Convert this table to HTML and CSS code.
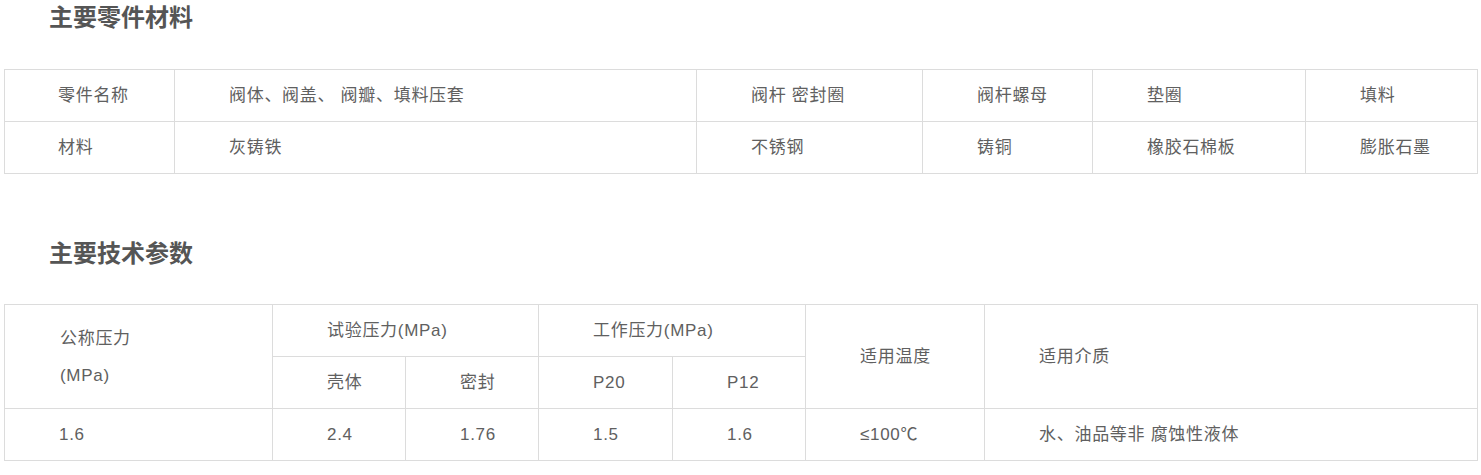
FILE: index.html
```html
<!DOCTYPE html>
<html lang="zh-CN">
<head>
<meta charset="utf-8">
<title>主要零件材料</title>
<link rel="stylesheet" href="styles.css">
</head>
<body>
<div class="page">
  <h2 class="title">主要零件材料</h2>
  <table class="spec parts">
    <colgroup>
      <col class="p1"><col class="p2"><col class="p3"><col class="p4"><col class="p5"><col class="p6">
    </colgroup>
    <tr>
      <td>零件名称</td>
      <td>阀体、阀盖、 阀瓣、填料压套</td>
      <td>阀杆 密封圈</td>
      <td>阀杆螺母</td>
      <td>垫圈</td>
      <td>填料</td>
    </tr>
    <tr>
      <td>材料</td>
      <td>灰铸铁</td>
      <td>不锈钢</td>
      <td>铸铜</td>
      <td>橡胶石棉板</td>
      <td>膨胀石墨</td>
    </tr>
  </table>

  <h2 class="title second">主要技术参数</h2>
  <table class="spec params">
    <colgroup>
      <col class="q1"><col class="q2"><col class="q3"><col class="q4"><col class="q5"><col class="q6"><col class="q7">
    </colgroup>
    <tr>
      <td rowspan="2" class="two-line"><span class="ln">公称压力</span><span class="ln">(MPa)</span></td>
      <td colspan="2">试验压力(MPa)</td>
      <td colspan="2">工作压力(MPa)</td>
      <td rowspan="2">适用温度</td>
      <td rowspan="2">适用介质</td>
    </tr>
    <tr>
      <td>壳体</td>
      <td>密封</td>
      <td>P20</td>
      <td>P12</td>
    </tr>
    <tr>
      <td>1.6</td>
      <td>2.4</td>
      <td>1.76</td>
      <td>1.5</td>
      <td>1.6</td>
      <td>≤100℃</td>
      <td>水、油品等非 腐蚀性液体</td>
    </tr>
  </table>
</div>
</body>
</html>
```

FILE: styles.css
```css
html, body {
  margin: 0;
  padding: 0;
  background: #fff;
}

body {
  font-family: "Liberation Sans", Arial, "Noto Sans CJK SC", sans-serif;
  color: #606060;
}

.page {
  padding: 0 4px;
  display: flex;
  flex-direction: column;
}

.title {
  margin: 0;
  padding-left: 45px;
  font-family: "Noto Sans CJK SC", sans-serif;
  font-size: 24px;
  font-weight: 700;
  line-height: 32px;
  color: #555;
}

.title.second {
  margin-top: 62px;
}

.spec {
  margin-top: 37px;
  width: 1473px;
  border-collapse: collapse;
  table-layout: fixed;
  font-size: 17px;
  letter-spacing: 0.7px;
}

.params {
  margin-top: 36px;
}

.spec td {
  border: 1px solid #dcdcdc;
  height: 52px;
  padding: 0 0 0 54px;
  box-sizing: border-box;
  text-align: left;
  vertical-align: middle;
  white-space: nowrap;
  line-height: 20px;
}

.parts td:first-child { padding-left: 53px; }

.params td.two-line {
  padding-left: 55px;
}

.two-line .ln {
  display: block;
  line-height: 37px;
}

.p1 { width: 170px; }
.p2 { width: 522px; }
.p3 { width: 226px; }
.p4 { width: 170px; }
.p5 { width: 213px; }
.p6 { width: 172px; }

.q1 { width: 268px; }
.q2 { width: 133px; }
.q3 { width: 133px; }
.q4 { width: 134px; }
.q5 { width: 133px; }
.q6 { width: 179px; }
.q7 { width: 493px; }
```
